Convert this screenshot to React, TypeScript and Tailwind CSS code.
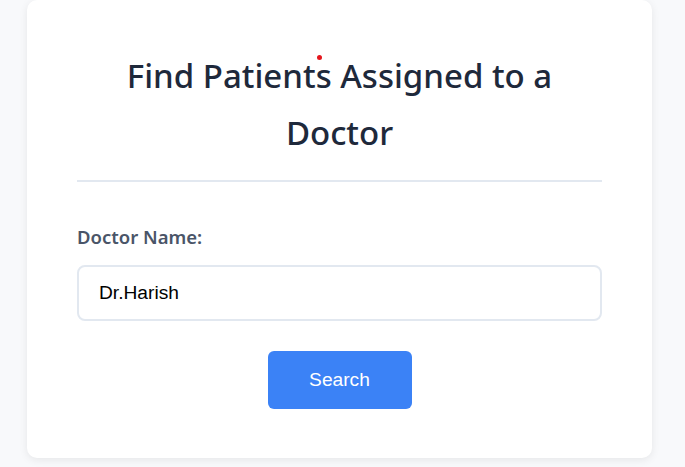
export default function App() {
  return (
    <div className="min-h-[467px] w-full bg-[#f8f9fb] pl-[27px] pr-[33px]">
      <div className="relative w-[625px] rounded-[10px] bg-white px-[50px] pb-[49px] pt-[47px] shadow-[0_2px_8px_rgba(0,0,0,0.08)]">
        <span className="absolute left-[290px] top-[55px] h-[5px] w-[5px] rounded-full bg-[#e5161d]" />
        <h2
          className="border-b-2 border-[#e2e8f0] pb-[19px] text-center text-[33px] font-medium leading-[57px] text-[#1e293b]"
          style={{ fontFamily: '"Noto Sans", "Open Sans", sans-serif' }}
        >
          Find Patients Assigned to a Doctor
        </h2>
        <div className="mt-[43px]">
          <label
            className="block text-[18.5px] font-semibold leading-[24px] text-[#4a5568]"
            style={{ fontFamily: '"Noto Sans", "Open Sans", sans-serif' }}
          >
            Doctor Name:
          </label>
          <input
            readOnly
            value="Dr.Harish"
            className="mt-[16px] box-border block h-[56px] w-full rounded-[8px] border-2 border-[#e2e8f0] bg-white px-[20px] text-[19.2px] text-black outline-none"
            style={{ fontFamily: '"Liberation Sans", Arial, sans-serif' }}
          />
        </div>
        <div className="mt-[30px] flex justify-center">
          <button
            className="h-[58px] w-[144px] rounded-[6px] bg-[#3b82f6] text-[19.2px] text-white"
            style={{ fontFamily: '"Liberation Sans", Arial, sans-serif' }}
          >
            Search
          </button>
        </div>
      </div>
    </div>
  );
}
